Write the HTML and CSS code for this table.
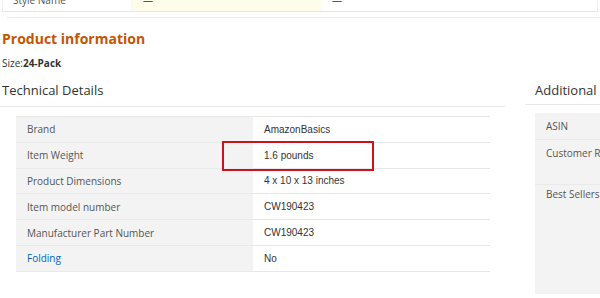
FILE: index.html
```html
<!DOCTYPE html>
<html lang="en">
<head>
    <meta charset="UTF-8">
    <meta name="viewport" content="width=device-width, initial-scale=1.0">
    <link rel="stylesheet" href="styles.css">
    <title>Product information</title>
</head>
<body>
    <div class="compare-row">
        <div class="compare-cell compare-label">Style Name</div>
        <div class="compare-cell compare-current">—</div>
        <div class="compare-cell">—</div>
    </div>
    <div class="divider"></div>

    <h2 class="prod-title">Product information</h2>
    <div class="size-line">Size:<b>24-Pack</b></div>

    <div class="details">
        <div class="details-left">
            <h3 class="section-title">Technical Details</h3>
            <table class="spec-table">
                <tr><th>Brand</th><td>AmazonBasics</td></tr>
                <tr class="marked"><th>Item Weight</th><td>1.6 pounds<span class="mark-box"></span></td></tr>
                <tr><th>Product Dimensions</th><td>4 x 10 x 13 inches</td></tr>
                <tr><th>Item model number</th><td>CW190423</td></tr>
                <tr><th>Manufacturer Part Number</th><td>CW190423</td></tr>
                <tr><th class="link">Folding</th><td>No</td></tr>
            </table>
        </div>
        <div class="details-right">
            <h3 class="section-title">Additional Information</h3>
            <table class="spec-table extra">
                <tr class="first"><th>ASIN</th><td>B07QXV6N1B</td></tr>
                <tr class="tall"><th>Customer Reviews</th><td></td></tr>
                <tr class="rest"><th>Best Sellers Rank</th><td></td></tr>
            </table>
        </div>
    </div>
</body>
</html>
```

FILE: styles.css
```css
* {
    box-sizing: border-box;
}

body {
    margin: 0;
    width: 600px;
    height: 298px;
    overflow: hidden;
    background: #fff;
    font-family: "Open Sans", "Noto Sans", sans-serif;
    color: #333;
}

/* comparison row cut off at the top */
.compare-row {
    display: flex;
    height: 26px;
    margin-top: -14px;
    margin-left: 2px;
    width: 596px;
    border-left: 1px solid #eee;
    border-right: 1px solid #eee;
    border-bottom: 1px solid #e7e7e7;
    font-size: 10px;
    line-height: 14px;
    color: #555;
}

.compare-cell {
    display: flex;
    align-items: flex-end;
    padding: 0 0 4px 11px;
}

.compare-label {
    width: 128px;
    padding-left: 10px;
}

.compare-current {
    width: 190px;
    background: #fefde9;
    padding-left: 12px;
}

.divider {
    height: 1px;
    margin: 5px 0 0 7px;
    background: #ececec;
}

.prod-title {
    margin: 12px 0 0 2px;
    font-size: 14px;
    font-weight: bold;
    color: #c45500;
    line-height: 18px;
}

.size-line {
    margin: 9px 0 0 2px;
    font-size: 10px;
    line-height: 13px;
    color: #333;
}

.details {
    display: flex;
    margin-top: 10px;
}

.details-left {
    width: 505px;
    flex: none;
}

.details-right {
    margin-left: 20px;
    flex: 1;
    min-width: 0;
}

.section-title {
    margin: 0;
    padding: 0 0 6px 2px;
    font-size: 13px;
    font-weight: normal;
    line-height: 20px;
    color: #333;
    white-space: nowrap;
    border-bottom: 1px solid #e7e7e7;
}

.details-right .section-title {
    padding-left: 10px;
    padding-bottom: 4px;
    overflow: hidden;
}

.spec-table {
    border-collapse: collapse;
    margin: 9px 0 0 16px;
    width: 474px;
    border-top: 1px solid #e7e7e7;
}

.spec-table th,
.spec-table td {
    height: 25.8px;
    padding: 0 11px;
    font-size: 10px;
    text-align: left;
    border-bottom: 1px solid #e7e7e7;
    white-space: nowrap;
}

.spec-table th {
    width: 237px;
    background: #f3f3f3;
    font-weight: normal;
    color: #555;
    border-bottom-color: #e9e9e9;
}

.spec-table td {
    position: relative;
    font-family: "Liberation Sans", Arial, sans-serif;
    color: #333;
}

.spec-table th.link {
    color: #0066c0;
}

/* red annotation around the weight value */
.mark-box {
    position: absolute;
    left: -31px;
    top: -2px;
    width: 152px;
    height: 30px;
    border: 2px solid #d0111b;
}

.spec-table.extra {
    margin: 8px 0 0 10px;
    width: 300px;
    border-top: none;
}

.extra th {
    width: 140px;
    vertical-align: top;
}

.extra tr.first th {
    height: 26px;
    vertical-align: middle;
}

.extra tr.tall th {
    height: 45px;
    padding-top: 6px;
}

.extra tr.rest th {
    height: 110px;
    padding-top: 2px;
    border-bottom: none;
}
```
